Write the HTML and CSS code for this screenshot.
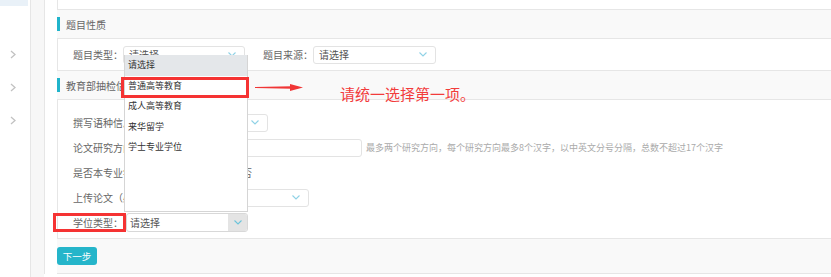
FILE: index.html
```html
<!DOCTYPE html>
<html lang="zh-CN">
<head>
<meta charset="utf-8">
<title>表单</title>
<link rel="stylesheet" href="styles.css">
</head>
<body>
<div class="page">
  <aside class="sidebar">
    <div class="side-active"></div>
    <div class="side-item"><svg class="chev" viewBox="0 0 6 9" width="6" height="9"><polyline points="1,1 5,4.5 1,8"/></svg></div>
    <div class="side-item"><svg class="chev" viewBox="0 0 6 9" width="6" height="9"><polyline points="1,1 5,4.5 1,8"/></svg></div>
    <div class="side-item"><svg class="chev" viewBox="0 0 6 9" width="6" height="9"><polyline points="1,1 5,4.5 1,8"/></svg></div>
  </aside>
  <div class="gutter"></div>
  <main class="panel">
    <div class="box box-top"></div>
    <div class="sec-head"><span class="bar"></span>题目性质</div>
    <div class="box row-box">
      <span class="label">题目类型：</span>
      <div class="select w122"><span>请选择</span><svg class="sel-chev" viewBox="0 0 8 5" width="8" height="5"><polyline points="0.5,0.5 4,4 7.5,0.5"/></svg></div>
      <span class="label ml18">题目来源：</span>
      <div class="select w123"><span>请选择</span><svg class="sel-chev" viewBox="0 0 8 5" width="8" height="5"><polyline points="0.5,0.5 4,4 7.5,0.5"/></svg></div>
    </div>
    <div class="sec-head"><span class="bar"></span>教育部抽检信息</div>
    <div class="box body-box">
      <div class="frow">
        <span class="label">撰写语种信息：</span>
        <div class="select w125"><span>请选择</span><svg class="sel-chev" viewBox="0 0 8 5" width="8" height="5"><polyline points="0.5,0.5 4,4 7.5,0.5"/></svg></div>
      </div>
      <div class="frow">
        <span class="label">论文研究方向：</span>
        <div class="input w219"></div>
        <span class="hint">最多两个研究方向，每个研究方向最多8个汉字，以中英文分号分隔，总数不超过17个汉字</span>
      </div>
      <div class="frow">
        <span class="label">是否本专业学位论文：</span>
        <span class="radio r-yes"></span><span class="rtext">是</span>
        <span class="radio r-no"></span><span class="rtext">否</span>
      </div>
      <div class="frow">
        <span class="label">上传论文（必填）：</span>
        <div class="select w151"><span></span><svg class="sel-chev" viewBox="0 0 8 5" width="8" height="5"><polyline points="0.5,0.5 4,4 7.5,0.5"/></svg></div>
      </div>
      <div class="frow">
        <span class="label">学位类型：</span>
        <div class="select w122 ml3 open"><span>请选择</span><span class="chev-box"><svg class="sel-chev" viewBox="0 0 8 5" width="8" height="5"><polyline points="0.5,0.5 4,4 7.5,0.5"/></svg></span></div>
      </div>
    </div>
    <div class="footer"><button class="btn">下一步</button></div>
  </main>

  <ul class="dropdown">
    <li class="hl">请选择</li>
    <li>普通高等教育</li>
    <li>成人高等教育</li>
    <li>来华留学</li>
    <li>学士专业学位</li>
  </ul>
  <div class="redbox rb1"></div>
  <div class="redbox rb2"></div>
  <svg class="arrow" viewBox="0 0 50 9" width="50" height="9"><polygon points="0,4 37,3.3 37,5.7 0,5"/><polygon points="35,1 48,4.5 35,8"/></svg>
  <div class="note">请统一选择第一项。</div>
</div>
</body>
</html>
```
FILE: styles.css
```css
* { box-sizing: border-box; margin: 0; padding: 0; }
body {
  width: 831px;
  height: 277px;
  overflow: hidden;
  background: #fff;
  font-family: "Noto Sans CJK SC", "Noto Sans", sans-serif;
  color: #666;
}
.page { position: relative; display: flex; height: 277px; }

.sidebar {
  width: 31px;
  flex: none;
  border-right: 1px solid #e6e6e6;
  background: #fff;
  display: flex;
  flex-direction: column;
}
.side-active { width: 28px; height: 6px; background: #e9f1f8; margin-bottom: 32px; }
.side-item { height: 33px; display: flex; align-items: center; padding-left: 10px; }
.chev { fill: none; stroke: #c2c2c2; stroke-width: 1.3; }

.gutter { width: 13px; flex: none; background: #f7f7f7; }

.panel {
  flex: 1;
  margin-right: -20px;
  border-left: 1px solid #e6e6e6;
  padding-left: 12px;
  background: #fff;
  display: flex;
  flex-direction: column;
  align-self: flex-start;
}
.box {
  background: #fff;
  border-left: 1px solid #e6e6e6;
  border-bottom: 1px solid #e6e6e6;
}
.box-top { height: 10px; }
.sec-head {
  height: 29px;
  background: #f9f9f9;
  border-bottom: 1px solid #e6e6e6;
  display: flex;
  align-items: center;
  font-size: 10px;
  color: #666;
}
.bar { width: 3px; height: 14px; background: #20b4cb; margin-right: 6px; }

.row-box { height: 32px; display: flex; align-items: center; padding-left: 15px; }
.label { font-size: 10px; color: #666; white-space: nowrap; }
.ml18 { margin-left: 18px; }
.ml3 { margin-left: 3px; }

.select, .input {
  height: 18px;
  border: 1px solid #e3e3e3;
  border-radius: 3px;
  background: #fff;
  display: flex;
  align-items: center;
  justify-content: space-between;
  padding: 0 8px 0 5px;
  font-size: 10px;
  color: #555;
  flex: none;
}
.sel-chev { fill: none; stroke: #8fd2e6; stroke-width: 1.1; }
.w122 { width: 122px; }
.w123 { width: 123px; }
.w125 { width: 125px; }
.w151 { width: 151px; }
.w219 { width: 219px; }

.body-box { height: 139px; padding: 10px 0 0 15px; display: flex; flex-direction: column; }
.frow { height: 25px; display: flex; align-items: center; }
.hint { font-size: 9px; color: #aaa; margin-left: 4px; white-space: nowrap; }
.radio { width: 10px; height: 10px; border: 1px solid #ccc; border-radius: 50%; flex: none; }
.r-yes { margin-left: 10px; margin-right: 3px; }
.r-no { margin-left: 22px; margin-right: 4px; }
.rtext { font-size: 10px; color: #666; }

.select.open { height: 19px; padding-left: 3px; padding-right: 0; overflow: hidden; border-color: #d8d8d8; }
.chev-box {
  width: 19px;
  align-self: stretch;
  background: #e4e4e4;
  display: flex;
  align-items: center;
  justify-content: center;
}
.chev-box .sel-chev { stroke: #6cc4da; }

.footer {
  height: 35px;
  background: #f9f9f9;
  border-bottom: 1px solid #e6e6e6;
  padding-top: 8px;
}
.btn {
  width: 40px;
  height: 18px;
  border: none;
  border-radius: 3px;
  background: #25b5ca;
  color: #fff;
  font-family: inherit;
  font-size: 9.5px;
  display: block;
}

.dropdown {
  position: absolute;
  left: 124px;
  top: 55px;
  width: 124px;
  height: 157px;
  background: #fff;
  border: 1px solid #d5d5d5;
  border-top: none;
  list-style: none;
}
.dropdown li {
  height: 20.5px;
  line-height: 20.5px;
  padding-left: 3px;
  font-size: 9px;
  color: #333;
}
.dropdown li.hl { background: #e4e7ea; }

.redbox { position: absolute; border: 3px solid #f53333; }
.rb1 { left: 121px; top: 77px; width: 128px; height: 21px; }
.rb2 { left: 53px; top: 213px; width: 73px; height: 19px; }

.arrow { position: absolute; left: 255px; top: 83px; fill: #f03535; }
.note {
  position: absolute;
  left: 340px;
  top: 84px;
  font-size: 15px;
  line-height: 20px;
  color: #f23c3c;
  white-space: nowrap;
}
```
